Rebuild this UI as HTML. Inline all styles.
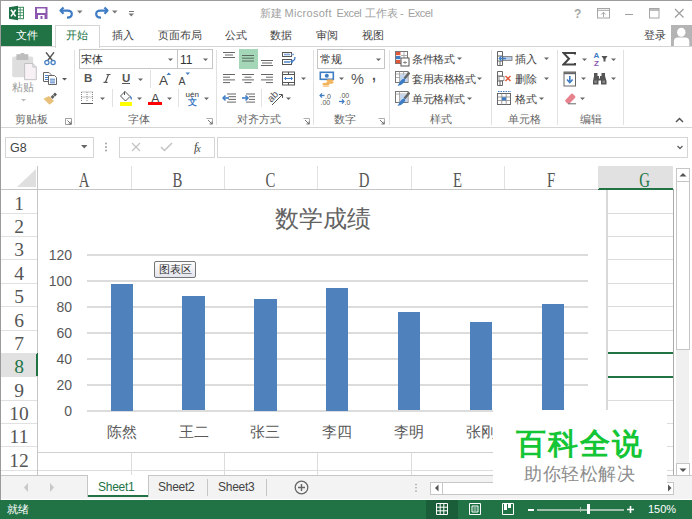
<!DOCTYPE html><html><head><meta charset="utf-8"><style>html,body{margin:0;padding:0;}
body{width:692px;height:519px;overflow:hidden;position:relative;background:#fff;font-family:"Liberation Sans",sans-serif;color:#444;}
.a{position:absolute;}
.t{position:absolute;white-space:nowrap;line-height:1;}
.ch{position:absolute;top:166px;height:23px;text-align:center;font-family:"Liberation Serif",serif;font-size:20px;line-height:29px;transform:scaleX(0.74);}
.rh{position:absolute;left:1px;width:36px;text-align:center;font-family:"Liberation Serif",serif;font-size:19.5px;padding-top:2px;box-sizing:border-box;}
</style></head><body>
<div class="a" style="left:0px;top:0px;width:692px;height:1px;background:#9b9b9b"></div>
<div class="a" style="left:0px;top:0px;width:1px;height:519px;background:#9b9b9b"></div>
<svg class="a" style="left:8px;top:5px" width="17" height="16">
<rect x="8.5" y="2.3" width="7" height="11.4" fill="#fff" stroke="#3a8a5c" stroke-width="1"/>
<path d="M9 5H15.5M9 7.7H15.5M9 10.4H15.5M12.2 2.3V13.7" stroke="#3a8a5c" stroke-width="0.9"/>
<path d="M1 2.2 L10 0.8 L10 15.2 L1 13.8Z" fill="#1e7145"/>
<path d="M3 4.8 L7.6 11.4 M7.6 4.8 L3 11.4" stroke="#fff" stroke-width="1.6"/>
</svg>
<svg class="a" style="left:35px;top:7px" width="13" height="12">
<path d="M0 0H12.5V12H0Z" fill="#8a56ae"/>
<rect x="2" y="1.5" width="8.5" height="4.5" fill="#fff"/>
<rect x="3" y="8" width="6.5" height="4" fill="#fff"/>
<rect x="5.5" y="9" width="2" height="3" fill="#8a56ae"/>
</svg>
<svg class="a" style="left:59px;top:6px" width="16" height="13">
<path d="M4.5 1.5 L1.5 4.6 L4.5 7.7" fill="none" stroke="#3e7cc4" stroke-width="2.2" stroke-linejoin="round"/>
<path d="M2.2 4.6 H8.5 Q12.8 4.6 12.8 8 Q12.8 11.6 8 11.6" fill="none" stroke="#3e7cc4" stroke-width="2.2"/>
</svg>
<svg class="a" style="left:77px;top:10px" width="6" height="4"><path d="M0 0.5H5.5L2.75 3.5Z" fill="#777"/></svg>
<svg class="a" style="left:94px;top:6px" width="16" height="13">
<path d="M10.5 1.5 L13.5 4.6 L10.5 7.7" fill="none" stroke="#3e7cc4" stroke-width="2.2" stroke-linejoin="round"/>
<path d="M12.8 4.6 H6.5 Q2.2 4.6 2.2 8 Q2.2 11.6 7 11.6" fill="none" stroke="#3e7cc4" stroke-width="2.2"/>
</svg>
<svg class="a" style="left:112px;top:10px" width="6" height="4"><path d="M0 0.5H5.5L2.75 3.5Z" fill="#777"/></svg>
<svg class="a" style="left:128px;top:10px" width="7" height="7"><path d="M1 1.5H6" stroke="#777" stroke-width="1"/><path d="M0.5 3.5H6L3.25 6.5Z" fill="#777"/></svg>
<div class="t" style="left:574px;top:8px;font-size:12px;font-weight:bold;color:#a6a6a6">?</div>
<svg class="a" style="left:597px;top:8px" width="13" height="11"><rect x="0.5" y="0.5" width="12" height="9.5" fill="none" stroke="#a6a6a6"/><path d="M0.5 2.3H12.5" stroke="#a6a6a6"/><path d="M6.5 9 V4.5 M4.3 6.5 L6.5 4.3 L8.7 6.5" fill="none" stroke="#a6a6a6" stroke-width="1"/></svg>
<div class="a" style="left:625px;top:14px;width:8px;height:1px;background:#a0a0a0"></div>
<svg class="a" style="left:649px;top:8px" width="11" height="11"><rect x="0.5" y="0.5" width="9.5" height="9.5" fill="none" stroke="#a6a6a6"/><path d="M0.5 2H10" stroke="#a6a6a6" stroke-width="1.5"/></svg>
<svg class="a" style="left:674px;top:8px" width="11" height="11"><path d="M1 1L9.5 9.5M9.5 1L1 9.5" stroke="#a0a0a0" stroke-width="1.3"/></svg>

<div class="t" style="left:259.5px;top:7.5px;font-size:11px;letter-spacing:0px;color:#a0a0a0">新建</div>
<div class="t" style="left:284.5px;top:7.5px;font-size:11px;letter-spacing:0.3px;color:#a0a0a0">Microsoft</div>
<div class="t" style="left:336.5px;top:7.5px;font-size:11px;letter-spacing:-0.4px;color:#a0a0a0">Excel</div>
<div class="t" style="left:364.5px;top:7.5px;font-size:10.5px;letter-spacing:0px;color:#a0a0a0">工作表</div>
<div class="t" style="left:400px;top:7.5px;font-size:11px;letter-spacing:0px;color:#a0a0a0">-</div>
<div class="t" style="left:408px;top:7.5px;font-size:11px;letter-spacing:-0.5px;color:#a0a0a0">Excel</div>
<div class="a" style="left:1px;top:25px;width:51px;height:22px;background:#217346"></div>
<div class="t" style="left:16px;top:30px;font-size:11px;color:#fff">文件</div>
<div class="a" style="left:55px;top:25px;width:43px;height:22px;border:1px solid #d5d5d5;border-bottom:none;background:#fff"></div>
<div class="t" style="left:66px;top:30px;font-size:11px;color:#217346">开始</div>
<div class="t" style="left:112px;top:30px;font-size:11px;color:#444">插入</div>
<div class="t" style="left:158px;top:30px;font-size:11px;color:#444">页面布局</div>
<div class="t" style="left:225px;top:30px;font-size:11px;color:#444">公式</div>
<div class="t" style="left:270px;top:30px;font-size:11px;color:#444">数据</div>
<div class="t" style="left:316px;top:30px;font-size:11px;color:#444">审阅</div>
<div class="t" style="left:362px;top:30px;font-size:11px;color:#444">视图</div>
<div class="t" style="left:644px;top:30px;font-size:11px;color:#444">登录</div>
<div class="a" style="left:671px;top:25px;width:21px;height:21px;background:#b4b4b4"></div>
<svg class="a" style="left:671px;top:25px" width="21" height="21"><ellipse cx="10.3" cy="7.2" rx="4.2" ry="4.5" fill="#fff"/><path d="M2.9 21 V16.5 Q2.9 12.4 7 12.4 H14.2 Q18.3 12.4 18.3 16.5 V21Z" fill="#fff"/></svg>
<div class="a" style="left:1px;top:46px;width:54px;height:1px;background:#d5d5d5"></div>
<div class="a" style="left:99px;top:46px;width:593px;height:1px;background:#d5d5d5"></div>
<div class="a" style="left:1px;top:127px;width:691px;height:1px;background:#d5d5d5"></div>
<div class="a" style="left:74px;top:50px;width:1px;height:75px;background:#e1e1e1"></div>
<div class="a" style="left:216px;top:50px;width:1px;height:75px;background:#e1e1e1"></div>
<div class="a" style="left:313px;top:50px;width:1px;height:75px;background:#e1e1e1"></div>
<div class="a" style="left:389px;top:50px;width:1px;height:75px;background:#e1e1e1"></div>
<div class="a" style="left:491px;top:50px;width:1px;height:75px;background:#e1e1e1"></div>
<div class="a" style="left:557px;top:50px;width:1px;height:75px;background:#e1e1e1"></div>
<div class="a" style="left:623px;top:50px;width:1px;height:75px;background:#e1e1e1"></div>
<div class="t" style="left:15px;top:114px;font-size:11px;color:#666">剪贴板</div>
<div class="t" style="left:128px;top:114px;font-size:11px;color:#666">字体</div>
<div class="t" style="left:237px;top:114px;font-size:11px;color:#666">对齐方式</div>
<div class="t" style="left:334px;top:114px;font-size:11px;color:#666">数字</div>
<div class="t" style="left:430px;top:114px;font-size:11px;color:#666">样式</div>
<div class="t" style="left:508px;top:114px;font-size:11px;color:#666">单元格</div>
<div class="t" style="left:580px;top:114px;font-size:11px;color:#666">编辑</div>
<svg class="a" style="left:11px;top:53px" width="27" height="28">
<rect x="1.2" y="3.4" width="21" height="20.8" rx="2" fill="#dedede"/>
<path d="M5.4 1.2 H17.3 V7 H5.4Z" fill="#bdbdbd"/>
<rect x="9.5" y="0" width="4" height="3" rx="1" fill="#bdbdbd"/>
<path d="M13.6 10.5 H21.8 L25.3 14 V26.7 H13.6Z" fill="#f7f0f4" stroke="#c3c3c3" stroke-width="1"/>
<path d="M21.8 10.5 V14 H25.3" fill="none" stroke="#c3c3c3" stroke-width="1"/>
</svg>
<div class="t" style="left:12px;top:82px;font-size:11px;color:#999">粘贴</div>
<svg class="a" style="left:21px;top:99px" width="6" height="3"><path d="M0 0H5L2.5 2.5Z" fill="#bbb"/></svg>
<svg class="a" style="left:43px;top:52px" width="14" height="14">
<path d="M3 0.3 L9.3 8.5 M11 0.3 L4.7 8.5" stroke="#555" stroke-width="1.4"/>
<circle cx="3.9" cy="10.6" r="2.1" fill="#fff" stroke="#4a82c6" stroke-width="1.3"/>
<circle cx="10.1" cy="10.6" r="2.1" fill="#fff" stroke="#4a82c6" stroke-width="1.3"/>
</svg>
<svg class="a" style="left:43px;top:72px" width="15" height="13">
<path d="M0.5 0.5 H6 L8 2.5 V9.5 H0.5Z" fill="#fff" stroke="#666" stroke-width="1"/>
<path d="M2 3.5H5M2 5.5H5M2 7.5H5" stroke="#4a82c6" stroke-width="1"/>
<path d="M5.5 3.5 H11.5 L13.5 5.5 V12.5 H5.5Z" fill="#fff" stroke="#666" stroke-width="1"/>
<path d="M7 7.2H12M7 9H12M7 10.8H12" stroke="#4a82c6" stroke-width="1"/>
</svg>
<svg class="a" style="left:62px;top:78px" width="6" height="3"><path d="M0 0H5L2.5 2.5Z" fill="#555"/></svg>
<svg class="a" style="left:43px;top:92px" width="15" height="13">
<path d="M11 1.5 L13 3.5" stroke="#555" stroke-width="2.6"/>
<path d="M7.5 5 L9.7 2.8 L11.7 4.8 L9.5 7Z" fill="#666"/>
<path d="M6 4 L11 9 L6.5 12.8 L0.5 6.8Z" fill="#e8c07a"/>
</svg>
<svg class="a" style="left:65px;top:118px" width="7" height="7"><path d="M0.5 0.5H6.5V6.5H0.5Z" fill="none" stroke="#888" stroke-width="0.8" stroke-dasharray="0"/><path d="M2.5 2.5L6 6M6 3.5V6H3.5" fill="none" stroke="#666" stroke-width="0.9"/></svg>
<div class="a" style="left:79px;top:49px;width:132px;height:18px;border:1px solid #c6c6c6;background:#fff"></div>
<div class="a" style="left:177px;top:49px;width:1px;height:20px;background:#c6c6c6"></div>
<div class="t" style="left:81px;top:54px;font-size:11px;color:#333">宋体</div>
<div class="t" style="left:180px;top:54px;font-size:12px;color:#333">11</div>
<svg class="a" style="left:168px;top:58px" width="6" height="4"><path d="M0 0.5H5L2.5 3Z" fill="#666"/></svg>
<svg class="a" style="left:203px;top:58px" width="6" height="4"><path d="M0 0.5H5L2.5 3Z" fill="#666"/></svg>
<div class="t" style="left:84px;top:73px;font-size:11.5px;font-weight:bold;color:#555">B</div>
<svg class="a" style="left:103px;top:74px" width="8" height="9"><path d="M3.5 0.5H7.5M0.5 8.3H4.5M5.5 0.5L2.5 8.3" fill="none" stroke="#555" stroke-width="1.2"/></svg>
<div class="t" style="left:122px;top:73px;font-size:11.5px;font-weight:bold;color:#555">U</div>
<div class="a" style="left:122px;top:83px;width:8px;height:1px;background:#555"></div>
<svg class="a" style="left:138px;top:78px" width="6" height="4"><path d="M0 0.5H5L2.5 3Z" fill="#666"/></svg>
<div class="a" style="left:150px;top:70px;width:1px;height:18px;background:#e1e1e1"></div>
<div class="t" style="left:159px;top:73.5px;font-size:13.5px;color:#444">A</div>
<svg class="a" style="left:165.5px;top:72px" width="6" height="4"><path d="M0.5 3H5L2.75 0.5Z" fill="#3e7cc4"/></svg>
<div class="t" style="left:178.5px;top:75.5px;font-size:10.5px;color:#444">A</div>
<svg class="a" style="left:185px;top:72px" width="6" height="4"><path d="M0.5 0.5H5L2.75 3Z" fill="#3e7cc4"/></svg>
<svg class="a" style="left:81px;top:91px" width="13" height="14">
<path d="M0.5 1V11M6 1V11M11.5 1V11M0.5 1H11.5M0.5 6H11.5" fill="none" stroke="#888" stroke-width="1" stroke-dasharray="1 1"/>
<path d="M0 12.5H12" stroke="#555" stroke-width="1"/>
</svg>
<svg class="a" style="left:100px;top:97px" width="6" height="4"><path d="M0 0.5H5L2.5 3Z" fill="#666"/></svg>
<div class="a" style="left:112px;top:89px;width:1px;height:18px;background:#e1e1e1"></div>
<svg class="a" style="left:119px;top:91px" width="15" height="11">
<path d="M6 0.5 L11 5.5 L6.5 10 L1.5 5Z" fill="#fff" stroke="#555" stroke-width="1"/>
<path d="M5.5 0.5V4" stroke="#555" stroke-width="1"/>
<path d="M11.5 4.5 Q13.5 6.5 12.5 9 Q11.3 8 11 6Z" fill="#3e7cc4"/>
</svg>
<div class="a" style="left:120px;top:102px;width:12px;height:4px;background:#ffff00"></div>
<svg class="a" style="left:137px;top:97px" width="6" height="4"><path d="M0 0.5H5L2.5 3Z" fill="#666"/></svg>
<div class="t" style="left:151px;top:91.5px;font-size:13px;color:#444">A</div>
<div class="a" style="left:148px;top:102px;width:14px;height:3px;background:#f00"></div>
<svg class="a" style="left:167px;top:97px" width="6" height="4"><path d="M0 0.5H5L2.5 3Z" fill="#666"/></svg>
<div class="a" style="left:178px;top:89px;width:1px;height:18px;background:#e1e1e1"></div>
<div class="t" style="left:185.5px;top:90.5px;font-size:8px;color:#333">uén</div>
<div class="t" style="left:188px;top:97.5px;font-size:8.5px;font-weight:bold;color:#3e7cc4">文</div>
<svg class="a" style="left:204px;top:97px" width="6" height="4"><path d="M0 0.5H5L2.5 3Z" fill="#666"/></svg>
<svg class="a" style="left:206px;top:118px" width="7" height="7"><path d="M0.5 0.5H6.5V6.5" fill="none" stroke="#999" stroke-width="0.8"/><path d="M2 2L6 6M6 3.5V6H3.5" fill="none" stroke="#666" stroke-width="0.9"/></svg>
<svg class="a" style="left:222px;top:50px" width="14" height="10"><path d="M1 2.5H13M3 5H11M1 7.5H13" stroke="#666" stroke-width="1"/></svg>
<div class="a" style="left:239px;top:49px;width:19px;height:20px;background:#a3d7b7"></div>
<svg class="a" style="left:241px;top:53px" width="14" height="10"><path d="M1 2.5H13M1 5.2H13M1 8H13" stroke="#5a6a60" stroke-width="1"/></svg>
<svg class="a" style="left:260px;top:58px" width="14" height="10"><path d="M1 2.5H13M2 5H12M1 7.5H13" stroke="#666" stroke-width="1"/></svg>
<svg class="a" style="left:281px;top:51px" width="16" height="15">
<rect x="1.5" y="1.5" width="9" height="4" fill="#fff" stroke="#555" stroke-width="1"/>
<rect x="3" y="2.7" width="6" height="1.6" fill="#7ea6d8"/>
<path d="M10.5 3.5H13" stroke="#7ea6d8" stroke-width="1.5"/>
<rect x="1.5" y="8.5" width="9" height="5" fill="#fff" stroke="#555" stroke-width="1"/>
<rect x="3" y="10" width="6" height="2" fill="#7ea6d8"/>
<path d="M14 6 Q14 10 10.5 10.5" fill="none" stroke="#3e7cc4" stroke-width="1.3"/>
<path d="M11.5 9 L10 10.5 L11.5 12" fill="none" stroke="#3e7cc4" stroke-width="1.2"/>
</svg>
<svg class="a" style="left:222px;top:73px" width="14" height="12"><path d="M1 1.5H13M1 4.2H8M1 6.9H13M1 9.6H8" stroke="#666" stroke-width="1"/></svg>
<svg class="a" style="left:241px;top:73px" width="14" height="12"><path d="M1 1.5H13M3.5 4.2H10.5M1 6.9H13M3.5 9.6H10.5" stroke="#666" stroke-width="1"/></svg>
<svg class="a" style="left:260px;top:73px" width="14" height="12"><path d="M1 1.5H13M6 4.2H13M1 6.9H13M6 9.6H13" stroke="#666" stroke-width="1"/></svg>
<svg class="a" style="left:281px;top:71px" width="15" height="15">
<rect x="1.5" y="1" width="12" height="13" fill="#fff" stroke="#555" stroke-width="1"/>
<path d="M1.5 3.5H13.5M1.5 11.5H13.5M7.5 1V3.5M7.5 11.5V14" stroke="#555" stroke-width="1"/>
<path d="M4 7.5H11" stroke="#3e7cc4" stroke-width="1"/>
<path d="M5 6L3.5 7.5L5 9M10 6L11.5 7.5L10 9" fill="none" stroke="#3e7cc4" stroke-width="1"/>
</svg>
<svg class="a" style="left:301px;top:77px" width="6" height="4"><path d="M0 0.5H5L2.5 3Z" fill="#666"/></svg>
<svg class="a" style="left:222px;top:93px" width="15" height="11">
<path d="M5 1H14M6.5 3.7H14M6.5 6.4H14M5 9.1H14" stroke="#666" stroke-width="1"/>
<path d="M1 5H7" stroke="#3e7cc4" stroke-width="1.6"/><path d="M3.5 2.5L1 5L3.5 7.5" fill="none" stroke="#3e7cc4" stroke-width="1.5"/>
</svg>
<svg class="a" style="left:241px;top:93px" width="15" height="11">
<path d="M5 1H14M8 3.7H14M8 6.4H14M5 9.1H14" stroke="#666" stroke-width="1"/>
<path d="M1 5H7" stroke="#3e7cc4" stroke-width="1.6"/><path d="M4.5 2.5L7 5L4.5 7.5" fill="none" stroke="#3e7cc4" stroke-width="1.5"/>
</svg>
<div class="a" style="left:261px;top:89px;width:1px;height:18px;background:#e1e1e1"></div>
<div class="t" style="left:268px;top:91px;font-size:10px;color:#555;transform:rotate(-45deg);transform-origin:6px 6px">ab</div>
<svg class="a" style="left:268px;top:92px" width="16" height="14"><path d="M4 13L14 3" stroke="#555" stroke-width="1"/><path d="M11 2.5H14.5V6" fill="none" stroke="#555" stroke-width="1"/></svg>
<svg class="a" style="left:286px;top:97px" width="6" height="4"><path d="M0 0.5H5L2.5 3Z" fill="#666"/></svg>
<svg class="a" style="left:303px;top:118px" width="7" height="7"><path d="M0.5 0.5H6.5V6.5" fill="none" stroke="#999" stroke-width="0.8"/><path d="M2 2L6 6M6 3.5V6H3.5" fill="none" stroke="#666" stroke-width="0.9"/></svg>
<div class="a" style="left:317px;top:49px;width:66px;height:18px;border:1px solid #c6c6c6;background:#fff"></div>
<div class="t" style="left:320px;top:54px;font-size:11px;color:#333">常规</div>
<svg class="a" style="left:376px;top:58px" width="6" height="4"><path d="M0 0.5H5L2.5 3Z" fill="#666"/></svg>
<svg class="a" style="left:319px;top:71px" width="16" height="16">
<rect x="1.3" y="1.3" width="13" height="7" fill="#fff" stroke="#3e7cc4" stroke-width="1.6"/>
<circle cx="7.8" cy="4.8" r="2" fill="#3e7cc4"/>
<ellipse cx="11" cy="9.5" rx="3.6" ry="1.3" fill="#f2b35a"/>
<ellipse cx="11" cy="11.5" rx="3.6" ry="1.3" fill="#f2b35a"/>
<ellipse cx="7" cy="13" rx="3.6" ry="1.3" fill="#f2b35a"/>
<ellipse cx="7" cy="15" rx="3.6" ry="1" fill="#f7d09a"/>
</svg>
<svg class="a" style="left:339px;top:77px" width="6" height="4"><path d="M0 0.5H5L2.5 3Z" fill="#666"/></svg>
<div class="t" style="left:351px;top:72px;font-size:14.5px;color:#555">%</div>
<div class="t" style="left:372px;top:68px;font-size:14px;font-weight:bold;color:#555">,</div>
<svg class="a" style="left:319px;top:92px" width="14" height="13">
<path d="M1 3.5H5.5" stroke="#3e7cc4" stroke-width="1.3"/><path d="M3 1.3L1 3.5L3 5.7" fill="none" stroke="#3e7cc4" stroke-width="1.2"/>
<text x="6" y="7" font-size="7" fill="#555" font-family="Liberation Sans">.0</text>
<text x="1.5" y="12.5" font-size="7" fill="#555" font-family="Liberation Sans">.00</text>
</svg>
<svg class="a" style="left:338px;top:92px" width="14" height="13">
<text x="1.5" y="6" font-size="7" fill="#555" font-family="Liberation Sans">.00</text>
<path d="M1 9.5H6" stroke="#3e7cc4" stroke-width="1.3"/><path d="M4 7.3L6 9.5L4 11.7" fill="none" stroke="#3e7cc4" stroke-width="1.2"/>
<text x="6.5" y="12.5" font-size="7" fill="#555" font-family="Liberation Sans">.0</text>
</svg>
<svg class="a" style="left:378px;top:118px" width="7" height="7"><path d="M0.5 0.5H6.5V6.5" fill="none" stroke="#999" stroke-width="0.8"/><path d="M2 2L6 6M6 3.5V6H3.5" fill="none" stroke="#666" stroke-width="0.9"/></svg>
<!-- styles -->
<svg class="a" style="left:395px;top:51px" width="15" height="16">
<rect x="0.5" y="0.5" width="12" height="12" fill="#fff" stroke="#777" stroke-width="1"/>
<rect x="1" y="1" width="4.5" height="3.2" fill="#e0573a"/>
<rect x="1" y="5" width="4.5" height="3.2" fill="#3e7cc4"/>
<rect x="1" y="9" width="4.5" height="3.2" fill="#e0573a"/>
<path d="M6 4.5H12.5M6 8.5H12.5M9 0.5V12.5" stroke="#999" stroke-width="0.8"/>
<rect x="6" y="7" width="8" height="8" fill="#fff" stroke="#555" stroke-width="1"/>
<path d="M8 11.5H12M10 10V13" stroke="#777" stroke-width="0.8"/>
</svg>
<svg class="a" style="left:395px;top:71px" width="15" height="16">
<rect x="0.5" y="0.5" width="12.5" height="11" fill="#fff" stroke="#777" stroke-width="1"/>
<path d="M0.5 3H13M4.5 0.5V11.5M8.5 0.5V11.5M0.5 6.5H13" stroke="#999" stroke-width="0.8"/>
<rect x="5" y="3.5" width="7.5" height="7.5" fill="#c4d6ee"/>
<path d="M14.5 1.5 L9.5 7.5" stroke="#666" stroke-width="2.4"/>
<path d="M9.8 7 Q11 9.5 8.5 12 Q6 14.8 2.5 15 Q4 12.5 5 10.5 Q6.5 8 9.8 7Z" fill="#3e7cc4"/>
</svg>
<svg class="a" style="left:395px;top:91px" width="15" height="16">
<rect x="0.5" y="0.5" width="12.5" height="11" fill="#fff" stroke="#777" stroke-width="1"/>
<path d="M0.5 3H13M4.5 0.5V11.5" stroke="#999" stroke-width="0.8"/>
<rect x="5" y="3.5" width="7.5" height="7.5" fill="#c4d6ee"/>
<path d="M14.5 1.5 L9.5 7.5" stroke="#666" stroke-width="2.4"/>
<path d="M9.8 7 Q11 9.5 8.5 12 Q6 14.8 2.5 15 Q4 12.5 5 10.5 Q6.5 8 9.8 7Z" fill="#3e7cc4"/>
</svg>
<div class="t" style="left:412px;top:54px;font-size:11px;letter-spacing:-0.4px;color:#444">条件格式</div>
<svg class="a" style="left:457px;top:57px" width="6" height="4"><path d="M0 0.5H5L2.5 3Z" fill="#666"/></svg>
<div class="t" style="left:412px;top:74px;font-size:11px;letter-spacing:-0.4px;color:#444">套用表格格式</div>
<svg class="a" style="left:477px;top:77px" width="6" height="4"><path d="M0 0.5H5L2.5 3Z" fill="#666"/></svg>
<div class="t" style="left:412px;top:94px;font-size:11px;letter-spacing:-0.4px;color:#444">单元格样式</div>
<svg class="a" style="left:467px;top:97px" width="6" height="4"><path d="M0 0.5H5L2.5 3Z" fill="#666"/></svg>
<!-- cells -->
<svg class="a" style="left:497px;top:51px" width="16" height="15">
<path d="M0.5 0.5H5.5V14.5H0.5Z M0.5 5H5.5 M0.5 10H5.5 M3 10V14.5" fill="#fff" stroke="#666" stroke-width="1"/>
<rect x="6" y="5.5" width="9" height="4" fill="#b9cde9" stroke="#777" stroke-width="0.8"/>
<path d="M9 7.5H2.5" stroke="#3e7cc4" stroke-width="1.4"/><path d="M4.5 5.3L2.3 7.5L4.5 9.7" fill="none" stroke="#3e7cc4" stroke-width="1.3"/>
</svg>
<svg class="a" style="left:497px;top:71px" width="16" height="15">
<path d="M0.5 0.5H5.5V14.5H0.5Z M0.5 5H5.5 M0.5 10H5.5 M3 10V14.5" fill="#fff" stroke="#666" stroke-width="1"/>
<rect x="2" y="5.5" width="5" height="4" fill="#fff" stroke="#777" stroke-width="0.8"/>
<path d="M8.5 5L13.5 10M13.5 5L8.5 10" stroke="#e0573a" stroke-width="1.4"/>
</svg>
<svg class="a" style="left:497px;top:90px" width="16" height="16">
<path d="M1 1.5H14" stroke="#3e7cc4" stroke-width="1" stroke-dasharray="1.5 1"/>
<rect x="0.5" y="3.5" width="13" height="11" fill="#fff" stroke="#666" stroke-width="1"/>
<path d="M0.5 7H13.5M0.5 10.5H13.5M4.8 3.5V14.5M9.2 3.5V14.5" stroke="#888" stroke-width="0.8"/>
<rect x="5" y="7.2" width="4" height="3.2" fill="#3e7cc4"/>
</svg>
<div class="t" style="left:515px;top:54px;font-size:11px;color:#444">插入</div>
<svg class="a" style="left:544px;top:57px" width="6" height="4"><path d="M0 0.5H5L2.5 3Z" fill="#666"/></svg>
<div class="t" style="left:515px;top:74px;font-size:11px;color:#444">删除</div>
<svg class="a" style="left:544px;top:77px" width="6" height="4"><path d="M0 0.5H5L2.5 3Z" fill="#666"/></svg>
<div class="t" style="left:515px;top:94px;font-size:11px;color:#444">格式</div>
<svg class="a" style="left:539px;top:97px" width="6" height="4"><path d="M0 0.5H5L2.5 3Z" fill="#666"/></svg>
<!-- editing -->
<svg class="a" style="left:562px;top:52px" width="15" height="14"><path d="M13 2.5 V1 H1.5 L7 6.8 L1.5 12.5 H13 V11" fill="none" stroke="#444" stroke-width="2"/></svg>
<svg class="a" style="left:582px;top:58px" width="6" height="4"><path d="M0 0.5H5L2.5 3Z" fill="#666"/></svg>
<svg class="a" style="left:563px;top:71px" width="14" height="16">
<rect x="1" y="1" width="11.5" height="14" fill="#fff" stroke="#666" stroke-width="1"/>
<path d="M1 2.2H12.5" stroke="#666" stroke-width="2"/>
<path d="M6.8 5V11.5" stroke="#3e7cc4" stroke-width="1.6"/><path d="M4 8.5L6.8 11.5L9.6 8.5" fill="none" stroke="#3e7cc4" stroke-width="1.6"/>
</svg>
<svg class="a" style="left:581px;top:77px" width="6" height="4"><path d="M0 0.5H5L2.5 3Z" fill="#666"/></svg>
<svg class="a" style="left:563px;top:92px" width="14" height="13">
<path d="M2 8.5 L8 2 Q9 1 10 2 L12 4 Q13 5 12 6 L6.5 11.5 H4 Z" fill="#e8818e"/>
<path d="M5 11.8H13" stroke="#666" stroke-width="1"/>
</svg>
<svg class="a" style="left:580px;top:97px" width="6" height="4"><path d="M0 0.5H5L2.5 3Z" fill="#666"/></svg>
<svg class="a" style="left:593px;top:51px" width="16" height="16">
<text x="0.5" y="7" font-size="8" font-weight="bold" fill="#3e7cc4" font-family="Liberation Sans">A</text>
<text x="1" y="15" font-size="8" font-weight="bold" fill="#8a56ae" font-family="Liberation Sans">Z</text>
<path d="M8.5 5H14.5L12.5 8V10.5H10.5V8Z" fill="#555"/>
</svg>
<svg class="a" style="left:611px;top:58px" width="6" height="4"><path d="M0 0.5H5L2.5 3Z" fill="#666"/></svg>
<svg class="a" style="left:592px;top:72px" width="16" height="13">
<path d="M2 1H5.5V4H7V6.5H8V4H9.5V1H13V4L14.5 9V12.5H9V8.5H6.5V12.5H1V9L2 4Z" fill="#555"/>
<rect x="2.3" y="8.5" width="2.5" height="2.5" fill="#888"/><rect x="10.5" y="8.5" width="2.5" height="2.5" fill="#888"/>
</svg>
<svg class="a" style="left:611px;top:77px" width="6" height="4"><path d="M0 0.5H5L2.5 3Z" fill="#666"/></svg>
<svg class="a" style="left:675px;top:117px" width="9" height="6"><path d="M1 5L4.5 1.5L8 5" fill="none" stroke="#555" stroke-width="1.5"/></svg>

<div class="a" style="left:5px;top:137px;width:87px;height:19px;border:1px solid #d5d5d5"></div>
<div class="t" style="left:10px;top:142px;font-size:12.5px;font-family:"Liberation Mono",monospace;color:#555">G8</div>
<div class="a" style="left:119px;top:137px;width:94px;height:19px;border:1px solid #d5d5d5"></div>
<div class="a" style="left:217px;top:137px;width:469px;height:19px;border:1px solid #d5d5d5"></div>
<svg class="a" style="left:81px;top:145px" width="7" height="4"><path d="M0 0H6.5L3.25 3.5Z" fill="#666"/></svg>
<svg class="a" style="left:104px;top:142px" width="4" height="12"><circle cx="2" cy="1.5" r="0.9" fill="#999"/><circle cx="2" cy="5" r="0.9" fill="#999"/><circle cx="2" cy="8.5" r="0.9" fill="#999"/></svg>
<svg class="a" style="left:131px;top:142px" width="10" height="10"><path d="M1 1L9 9M9 1L1 9" stroke="#c2c2c2" stroke-width="1.2"/></svg>
<svg class="a" style="left:160px;top:142px" width="13" height="10"><path d="M1 5L4.5 8.5L12 1" fill="none" stroke="#c2c2c2" stroke-width="1.5"/></svg>
<div class="t" style="left:194px;top:141px;font-size:12px;font-style:italic;font-family:'Liberation Serif',serif;color:#444">f<span style="font-size:10px;position:relative;top:1px;left:-1px">x</span></div>
<svg class="a" style="left:676px;top:145px" width="8" height="5"><path d="M1.5 1L4 3.5L6.5 1" fill="none" stroke="#666" stroke-width="1.4"/></svg>

<div class="a" style="left:598px;top:166px;width:75px;height:23px;background:#e1e1e1"></div>
<div class="a" style="left:598px;top:188px;width:75px;height:2px;background:#217346"></div>
<div class="a" style="left:131px;top:166px;width:1px;height:23px;background:#e1e1e1"></div>
<div class="a" style="left:224px;top:166px;width:1px;height:23px;background:#e1e1e1"></div>
<div class="a" style="left:317px;top:166px;width:1px;height:23px;background:#e1e1e1"></div>
<div class="a" style="left:411px;top:166px;width:1px;height:23px;background:#e1e1e1"></div>
<div class="a" style="left:504px;top:166px;width:1px;height:23px;background:#e1e1e1"></div>
<div class="a" style="left:598px;top:166px;width:1px;height:23px;background:#e1e1e1"></div>
<div class="a" style="left:1px;top:189px;width:597px;height:1px;background:#c6c6c6"></div>
<div class="a" style="left:37px;top:166px;width:1px;height:310px;background:#c6c6c6"></div>
<svg class="a" style="left:17px;top:169px" width="20" height="19"><path d="M19 0 L19 18 L0 18Z" fill="#dfdfdf"/></svg>
<div class="ch" style="left:37px;width:94px;color:#555">A</div>
<div class="ch" style="left:131px;width:93px;color:#555">B</div>
<div class="ch" style="left:224px;width:93px;color:#555">C</div>
<div class="ch" style="left:317px;width:94px;color:#555">D</div>
<div class="ch" style="left:411px;width:93px;color:#555">E</div>
<div class="ch" style="left:504px;width:94px;color:#555">F</div>
<div class="ch" style="left:598px;width:93px;color:#217346">G</div>
<div class="a" style="left:1px;top:353px;width:36px;height:23px;background:#e1e1e1"></div>
<div class="a" style="left:36px;top:353px;width:2px;height:23px;background:#217346"></div>
<div class="a" style="left:1px;top:213px;width:36px;height:1px;background:#e1e1e1"></div>
<div class="rh" style="top:189px;height:24px;line-height:25px;color:#555">1</div>
<div class="a" style="left:1px;top:236px;width:36px;height:1px;background:#e1e1e1"></div>
<div class="rh" style="top:213px;height:23px;line-height:24px;color:#555">2</div>
<div class="a" style="left:1px;top:259px;width:36px;height:1px;background:#e1e1e1"></div>
<div class="rh" style="top:236px;height:23px;line-height:24px;color:#555">3</div>
<div class="a" style="left:1px;top:283px;width:36px;height:1px;background:#e1e1e1"></div>
<div class="rh" style="top:259px;height:24px;line-height:25px;color:#555">4</div>
<div class="a" style="left:1px;top:306px;width:36px;height:1px;background:#e1e1e1"></div>
<div class="rh" style="top:283px;height:23px;line-height:24px;color:#555">5</div>
<div class="a" style="left:1px;top:330px;width:36px;height:1px;background:#e1e1e1"></div>
<div class="rh" style="top:306px;height:24px;line-height:25px;color:#555">6</div>
<div class="a" style="left:1px;top:353px;width:36px;height:1px;background:#e1e1e1"></div>
<div class="rh" style="top:330px;height:23px;line-height:24px;color:#555">7</div>
<div class="a" style="left:1px;top:376px;width:36px;height:1px;background:#e1e1e1"></div>
<div class="rh" style="top:353px;height:23px;line-height:24px;color:#217346">8</div>
<div class="a" style="left:1px;top:400px;width:36px;height:1px;background:#e1e1e1"></div>
<div class="rh" style="top:376px;height:24px;line-height:25px;color:#555">9</div>
<div class="a" style="left:1px;top:423px;width:36px;height:1px;background:#e1e1e1"></div>
<div class="rh" style="top:400px;height:23px;line-height:24px;color:#555">10</div>
<div class="a" style="left:1px;top:446px;width:36px;height:1px;background:#e1e1e1"></div>
<div class="rh" style="top:423px;height:23px;line-height:24px;color:#555">11</div>
<div class="a" style="left:1px;top:470px;width:36px;height:1px;background:#e1e1e1"></div>
<div class="rh" style="top:446px;height:24px;line-height:25px;color:#555">12</div>
<div class="a" style="left:38px;top:213px;width:635px;height:1px;background:#dadcdd"></div>
<div class="a" style="left:38px;top:236px;width:635px;height:1px;background:#dadcdd"></div>
<div class="a" style="left:38px;top:259px;width:635px;height:1px;background:#dadcdd"></div>
<div class="a" style="left:38px;top:283px;width:635px;height:1px;background:#dadcdd"></div>
<div class="a" style="left:38px;top:306px;width:635px;height:1px;background:#dadcdd"></div>
<div class="a" style="left:38px;top:330px;width:635px;height:1px;background:#dadcdd"></div>
<div class="a" style="left:38px;top:353px;width:635px;height:1px;background:#dadcdd"></div>
<div class="a" style="left:38px;top:376px;width:635px;height:1px;background:#dadcdd"></div>
<div class="a" style="left:38px;top:400px;width:635px;height:1px;background:#dadcdd"></div>
<div class="a" style="left:38px;top:423px;width:635px;height:1px;background:#dadcdd"></div>
<div class="a" style="left:38px;top:446px;width:635px;height:1px;background:#dadcdd"></div>
<div class="a" style="left:38px;top:470px;width:635px;height:1px;background:#dadcdd"></div>
<div class="a" style="left:131px;top:190px;width:1px;height:286px;background:#dadcdd"></div>
<div class="a" style="left:224px;top:190px;width:1px;height:286px;background:#dadcdd"></div>
<div class="a" style="left:317px;top:190px;width:1px;height:286px;background:#dadcdd"></div>
<div class="a" style="left:411px;top:190px;width:1px;height:286px;background:#dadcdd"></div>
<div class="a" style="left:504px;top:190px;width:1px;height:286px;background:#dadcdd"></div>
<div class="a" style="left:598px;top:190px;width:1px;height:286px;background:#dadcdd"></div>
<div class="a" style="left:673px;top:189px;width:1px;height:287px;background:#ababab"></div>
<div class="a" style="left:673px;top:166px;width:19px;height:23px;background:#fff"></div>
<div class="a" style="left:674px;top:189px;width:18px;height:287px;background:#fff"></div>
<div class="a" style="left:676px;top:168px;width:13px;height:308px;background:#f0f0f0"></div>
<div class="a" style="left:598px;top:352px;width:75px;height:2px;background:#217346"></div>
<div class="a" style="left:598px;top:376px;width:75px;height:2px;background:#217346"></div>
<div class="a" style="left:38px;top:190px;width:569px;height:262px;background:#fff"></div>
<div class="a" style="left:606px;top:190px;width:2px;height:263px;background:#d9d9d9"></div>
<div class="a" style="left:38px;top:452px;width:569px;height:1px;background:#d0d0d0"></div>
<div class="t" style="left:274.5px;top:207px;font-size:24px;color:#636363">数学成绩</div>
<div class="a" style="left:87px;top:254px;width:501px;height:2px;background:#dcdcdc"></div>
<div class="t" style="left:32px;width:40px;text-align:right;top:248px;font-size:14px;color:#595959">120</div>
<div class="a" style="left:87px;top:280px;width:501px;height:2px;background:#dcdcdc"></div>
<div class="t" style="left:32px;width:40px;text-align:right;top:274px;font-size:14px;color:#595959">100</div>
<div class="a" style="left:87px;top:306px;width:501px;height:2px;background:#dcdcdc"></div>
<div class="t" style="left:32px;width:40px;text-align:right;top:300px;font-size:14px;color:#595959">80</div>
<div class="a" style="left:87px;top:332px;width:501px;height:2px;background:#dcdcdc"></div>
<div class="t" style="left:32px;width:40px;text-align:right;top:326px;font-size:14px;color:#595959">60</div>
<div class="a" style="left:87px;top:358px;width:501px;height:2px;background:#dcdcdc"></div>
<div class="t" style="left:32px;width:40px;text-align:right;top:352px;font-size:14px;color:#595959">40</div>
<div class="a" style="left:87px;top:384px;width:501px;height:2px;background:#dcdcdc"></div>
<div class="t" style="left:32px;width:40px;text-align:right;top:378px;font-size:14px;color:#595959">20</div>
<div class="a" style="left:87px;top:410px;width:501px;height:2px;background:#dcdcdc"></div>
<div class="t" style="left:32px;width:40px;text-align:right;top:404px;font-size:14px;color:#595959">0</div>
<div class="a" style="left:110.7px;top:283.5px;width:22.3px;height:127.0px;background:#4f81bd"></div>
<div class="t" style="left:81.85000000000001px;width:80px;text-align:center;top:424px;font-size:15px;color:#595959">陈然</div>
<div class="a" style="left:182.4px;top:295.6px;width:22.3px;height:114.89999999999998px;background:#4f81bd"></div>
<div class="t" style="left:153.55px;width:80px;text-align:center;top:424px;font-size:15px;color:#595959">王二</div>
<div class="a" style="left:254.3px;top:299px;width:22.3px;height:111.5px;background:#4f81bd"></div>
<div class="t" style="left:225.45px;width:80px;text-align:center;top:424px;font-size:15px;color:#595959">张三</div>
<div class="a" style="left:326px;top:288px;width:22.3px;height:122.5px;background:#4f81bd"></div>
<div class="t" style="left:297.15px;width:80px;text-align:center;top:424px;font-size:15px;color:#595959">李四</div>
<div class="a" style="left:398px;top:312.3px;width:22.3px;height:98.19999999999999px;background:#4f81bd"></div>
<div class="t" style="left:369.15px;width:80px;text-align:center;top:424px;font-size:15px;color:#595959">李明</div>
<div class="a" style="left:469.7px;top:321.6px;width:22.3px;height:88.89999999999998px;background:#4f81bd"></div>
<div class="t" style="left:440.84999999999997px;width:80px;text-align:center;top:424px;font-size:15px;color:#595959">张刚</div>
<div class="a" style="left:541.6px;top:304.2px;width:22.3px;height:106.30000000000001px;background:#4f81bd"></div>
<div class="t" style="left:512.75px;width:80px;text-align:center;top:424px;font-size:15px;color:#595959">赵六</div>
<div class="a" style="left:154px;top:261px;width:40px;height:15px;border:1px solid #767676;border-radius:2px;background:linear-gradient(#fdfdfd,#e4e5ee)"></div>
<div class="t" style="left:159px;top:264px;font-size:11px;color:#333">图表区</div>
<div class="a" style="left:676px;top:168px;width:12px;height:12px;background:#fff;border:1px solid #c6c6c6"></div>
<svg class="a" style="left:677px;top:169px" width="12" height="12"><path d="M2.5 7.5 L6 4 L9.5 7.5Z" fill="#555"/></svg>
<div class="a" style="left:676px;top:181px;width:12px;height:167px;background:#fff;border:1px solid #c6c6c6"></div>
<div class="a" style="left:676px;top:463px;width:12px;height:12px;background:#fff;border:1px solid #c6c6c6"></div>
<svg class="a" style="left:677px;top:464px" width="12" height="12"><path d="M2.5 4.5 L6 8 L9.5 4.5Z" fill="#555"/></svg>

<div class="a" style="left:1px;top:475px;width:691px;height:24px;background:#f3f3f3"></div>
<div class="a" style="left:1px;top:475px;width:691px;height:1px;background:#c6c6c6"></div>
<svg class="a" style="left:22px;top:482px" width="34" height="11"><path d="M6 1 L2 5.5 L6 10Z" fill="#c8c8c8"/><path d="M28 1 L32 5.5 L28 10Z" fill="#c8c8c8"/></svg>
<div class="a" style="left:87px;top:475px;width:60px;height:22px;background:#fff;border-left:1px solid #c6c6c6;border-right:1px solid #c6c6c6"></div>
<div class="a" style="left:88px;top:495px;width:60px;height:2px;background:#217346"></div>
<div class="t" style="left:98px;top:481px;font-size:12px;letter-spacing:-0.25px;color:#217346">Sheet1</div>
<div class="t" style="left:158px;top:481px;font-size:12px;letter-spacing:-0.25px;color:#444">Sheet2</div>
<div class="a" style="left:207px;top:479px;width:1px;height:17px;background:#c6c6c6"></div>
<div class="t" style="left:218px;top:481px;font-size:12px;letter-spacing:-0.25px;color:#444">Sheet3</div>
<div class="a" style="left:266px;top:479px;width:1px;height:17px;background:#c6c6c6"></div>
<svg class="a" style="left:294px;top:480px" width="15" height="15"><circle cx="7.5" cy="7.5" r="6.3" fill="none" stroke="#666" stroke-width="1.3"/><path d="M7.5 4V11M4 7.5H11" stroke="#666" stroke-width="1.4"/></svg>
<svg class="a" style="left:414px;top:483px" width="4" height="10"><circle cx="2" cy="1.5" r="0.8" fill="#999"/><circle cx="2" cy="4.8" r="0.8" fill="#999"/><circle cx="2" cy="8.1" r="0.8" fill="#999"/></svg>
<div class="a" style="left:430px;top:482px;width:242px;height:11px;background:#fff;border:1px solid #c6c6c6"></div>
<div class="a" style="left:442px;top:482px;width:1px;height:12px;background:#c6c6c6"></div>
<svg class="a" style="left:433px;top:484px" width="8" height="9"><path d="M5.5 0.5 L2 4 L5.5 7.5Z" fill="#555"/></svg>
<div class="a" style="left:666px;top:482px;width:1px;height:12px;background:#c6c6c6"></div>
<svg class="a" style="left:667px;top:484px" width="6" height="9"><path d="M1 0.5 L4.5 4 L1 7.5Z" fill="#555"/></svg>

<div class="a" style="left:1px;top:499px;width:691px;height:1px;background:#fff"></div>
<div class="a" style="left:0px;top:500px;width:692px;height:19px;background:#217346"></div>
<div class="t" style="left:7px;top:504px;font-size:11px;color:#fff">就绪</div>
<div class="a" style="left:426px;top:500px;width:32px;height:19px;background:#1a5e39"></div>
<svg class="a" style="left:436px;top:503px" width="12" height="12"><path d="M0.5 0.5H11.5V11.5H0.5Z M4.2 0.5V11.5 M7.8 0.5V11.5 M0.5 4.2H11.5 M0.5 7.8H11.5" fill="none" stroke="#fff" stroke-width="1"/></svg>
<svg class="a" style="left:469px;top:503px" width="12" height="12"><path d="M0.5 0.5H11.5V11.5H0.5Z" fill="none" stroke="#fff" stroke-width="1"/><path d="M3 3H9V9H3Z" fill="none" stroke="#fff" stroke-width="1"/><path d="M4.5 5H7.5M4.5 7H7.5" stroke="#fff" stroke-width="0.8"/></svg>
<svg class="a" style="left:502px;top:503px" width="12" height="12"><path d="M0.5 0.5H11.5V11.5H0.5Z" fill="none" stroke="#fff" stroke-width="1"/><path d="M2 1H5V7H2Z M6 1H9V5H6Z" fill="#fff"/></svg>
<div class="a" style="left:528px;top:509px;width:6px;height:2px;background:#fff"></div>
<div class="a" style="left:537px;top:509px;width:87px;height:2px;background:#9fbfab"></div>
<div class="a" style="left:580px;top:507px;width:1px;height:5px;background:#9fbfab"></div>
<div class="a" style="left:587px;top:504px;width:3px;height:10px;background:#fff"></div>
<svg class="a" style="left:627px;top:506px" width="7" height="7"><path d="M3.5 0V7M0 3.5H7" stroke="#fff" stroke-width="1.6"/></svg>
<div class="t" style="left:648px;top:504px;font-size:11px;color:#fff">150%</div>

<div class="a" style="left:493px;top:410px;width:174px;height:84px;background:#fff"></div>
<div class="t" style="left:516px;top:429px;font-size:30px;letter-spacing:2px;font-weight:bold;color:#14c535">百科全说</div>
<div class="t" style="left:524px;top:465px;font-size:18.2px;letter-spacing:0.5px;color:#8c8c8c">助你轻松解决</div>
</body></html>
